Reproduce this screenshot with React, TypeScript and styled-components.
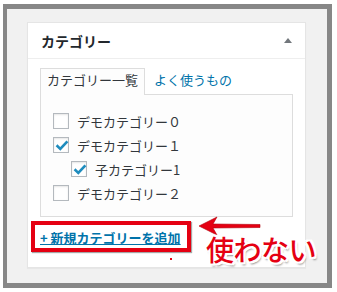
import React from 'react';
import styled, { createGlobalStyle } from 'styled-components';

const GlobalStyle = createGlobalStyle`
  body {
    margin: 0;
    background: #fff;
    font-family: "Noto Sans CJK JP", "Noto Sans", sans-serif;
  }
`;

const Stage = styled.div`
  position: relative;
  width: 337px;
  height: 292px;
  overflow: hidden;
`;

const Frame = styled.div`
  box-sizing: border-box;
  margin: 4px 0 0 3px;
  width: 329px;
  height: 284px;
  border-style: solid;
  border-color: #878787;
  border-width: 5px 5px 5px 4px;
  background: #f1f1f1;
  padding: 13px 21px 15px 20px;
`;

const Panel = styled.div`
  box-sizing: border-box;
  height: 246px;
  background: #fff;
  border: 1px solid #e5e5e5;
  box-shadow: 0 1px 1px rgba(0, 0, 0, 0.04);
`;

const Header = styled.div`
  box-sizing: border-box;
  height: 36px;
  display: flex;
  align-items: center;
  justify-content: space-between;
  padding-left: 13px;
  border-bottom: 1px solid #eee;
`;

const Title = styled.h2`
  margin: 0;
  font-size: 14px;
  font-weight: 700;
  color: #23282d;
  line-height: 20px;
`;

const Toggle = styled.span`
  width: 0;
  height: 0;
  margin-right: 13px;
  border-left: 4px solid transparent;
  border-right: 4px solid transparent;
  border-bottom: 5px solid #72777c;
`;

const Body = styled.div`
  padding: 9px 12px 0 12px;
`;

const TabBar = styled.div`
  display: flex;
  align-items: flex-end;
  height: 27px;
  margin-bottom: -1px;
`;

const Tab = styled.div<{ $active?: boolean }>`
  position: relative;
  z-index: 1;
  box-sizing: border-box;
  height: 27px;
  padding: 0 6px;
  margin-left: ${p => (p.$active ? 0 : 2)}px;
  line-height: 21px;
  font-size: 13px;
  color: ${p => (p.$active ? '#32373c' : '#0073aa')};
  border: 1px solid ${p => (p.$active ? '#ddd' : 'transparent')};
  border-bottom: 0;
  background: ${p => (p.$active ? '#fdfdfd' : 'transparent')};
`;

const TabPanel = styled.div`
  border: 1px solid #ddd;
  background: #fdfdfd;
  padding: 14px 12px 11px 12px;
`;

const Row = styled.label<{ $indent?: number }>`
  display: flex;
  align-items: center;
  height: 24px;
  padding-left: ${p => p.$indent ?? 0}px;
  font-size: 13px;
  color: #32373c;
`;

const Box = styled.span`
  box-sizing: border-box;
  position: relative;
  width: 16px;
  height: 16px;
  margin-right: 8px;
  border: 1px solid #b4b9be;
  background: #fff;
  box-shadow: inset 0 1px 2px rgba(0, 0, 0, 0.1);
  svg {
    position: absolute;
    left: 1px;
    top: 1px;
  }
`;

const AddLink = styled.a`
  display: inline-block;
  margin-top: 11px;
  line-height: 20px;
  font-size: 13px;
  font-weight: 700;
  color: #0073aa;
  text-decoration: underline;
`;

const RedBox = styled.div`
  position: absolute;
  left: 31px;
  top: 221px;
  width: 160px;
  height: 31px;
  box-sizing: border-box;
  border: 4px solid #e50012;
  box-shadow: 1px 1px 1px rgba(0, 0, 0, 0.35);
`;

const RedDot = styled.div`
  position: absolute;
  left: 170px;
  top: 258px;
  width: 2px;
  height: 2px;
  background: #e50012;
`;

const Arrow = styled.svg`
  position: absolute;
  left: 195px;
  top: 214px;
`;

const Note = styled.div`
  position: absolute;
  left: 206px;
  top: 234px;
  font-size: 28px;
  line-height: 30px;
  font-weight: 500;
  letter-spacing: -0.5px;
  color: #e50012;
  text-shadow:
    -2px -2px 0 #fff, 2px -2px 0 #fff, -2px 2px 0 #fff, 2px 2px 0 #fff,
    0 -2px 0 #fff, 0 2px 0 #fff, -2px 0 0 #fff, 2px 0 0 #fff,
    2px 3px 2px rgba(0, 0, 0, 0.45);
`;

const Check = () => (
  <svg width="14" height="14" viewBox="0 0 14 14">
    <path d="M2.5 7.2 L5.3 10 L11.5 3.3" fill="none" stroke="#1e8cbe" strokeWidth="2.6" strokeLinecap="square" />
  </svg>
);

const items = [
  { label: 'デモカテゴリー０', checked: false, indent: 0 },
  { label: 'デモカテゴリー１', checked: true, indent: 0 },
  { label: '子カテゴリー1', checked: true, indent: 18 },
  { label: 'デモカテゴリー２', checked: false, indent: 0 },
];

export default function App() {
  return (
    <Stage>
      <GlobalStyle />
      <Frame>
        <Panel>
          <Header>
            <Title>カテゴリー</Title>
            <Toggle />
          </Header>
          <Body>
            <TabBar>
              <Tab $active>カテゴリー一覧</Tab>
              <Tab>よく使うもの</Tab>
            </TabBar>
            <TabPanel>
              {items.map(item => (
                <Row key={item.label} $indent={item.indent}>
                  <Box>{item.checked && <Check />}</Box>
                  {item.label}
                </Row>
              ))}
            </TabPanel>
            <AddLink>+ 新規カテゴリーを追加</AddLink>
          </Body>
        </Panel>
      </Frame>
      <RedBox />
      <RedDot />
      <Arrow width="70" height="24" viewBox="0 0 70 24">
        <path d="M4 12 L22 3 L18 10 L65 10.5 L65 13.5 L18 14 L22 21 Z" fill="#e50012" stroke="#b0000c" strokeWidth="0.6" />
      </Arrow>
      <Note>使わない</Note>
    </Stage>
  );
}
